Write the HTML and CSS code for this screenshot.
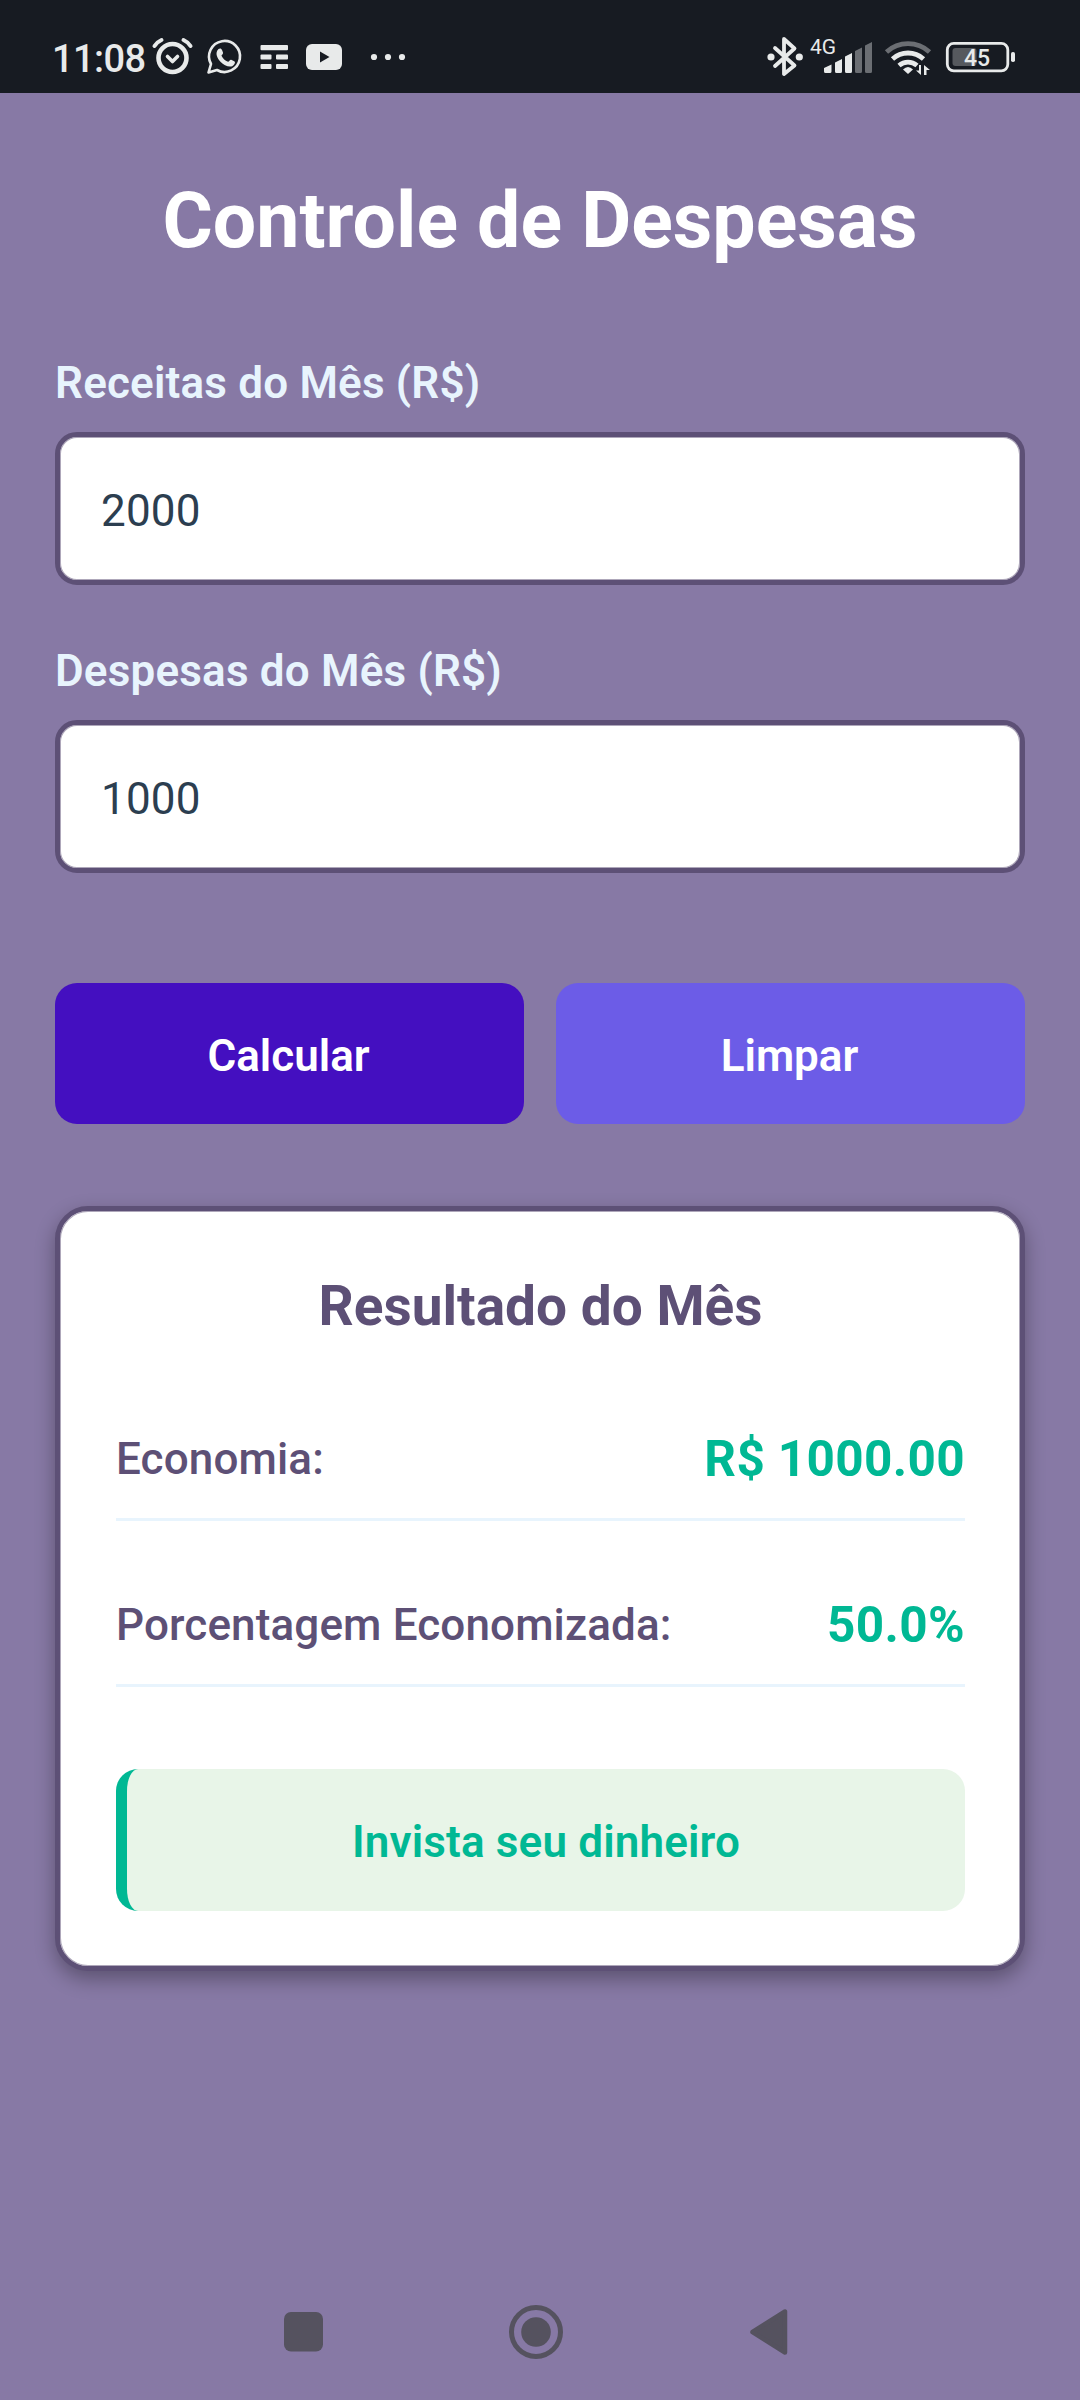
FILE: index.html
```html
<!DOCTYPE html>
<html lang="pt-BR">
<head>
<meta charset="utf-8">
<title>Controle de Despesas</title>
<link rel="stylesheet" href="styles.css">
</head>
<body>
<header class="status">
  <div class="status-left">
    <span class="clock">11:08</span>
    <svg class="icon" width="50" height="93" viewBox="150 0 50 93">
      <g fill="none" stroke="#e8eaea" stroke-linecap="round">
        <circle cx="172.500" cy="58" r="14" stroke-width="4.600"/>
        <path d="M167.500 56.500l5 5 5-5" stroke-width="3.600" stroke-linejoin="round"/>
        <path d="M154.500 46q2.500-4 7-6M190.500 46q-2.500-4-7-6" stroke-width="4"/>
      </g>
    </svg>
    <svg class="icon" width="50" height="93" viewBox="200 0 50 93">
      <path d="M208.500 72.500l2.500-8.500a15.500 15.500 0 1 1 6 6z" fill="none" stroke="#e8eaea" stroke-width="2.600" stroke-linejoin="round"/>
      <path d="M218.500 49c1.500-1 3-.5 3.500 1l1 2.500c.5 1.500-1.500 2.500-1.500 3.200 1.500 3 3.500 4.800 6.500 6 1 .2 2-2.500 3.200-2l3 1.600c2 1-.3 4.200-2 4.900-3.500 1.300-8.500-1-11.500-4.200-3.500-3.700-6.200-9-2.200-13z" fill="#e8eaea"/>
    </svg>
    <svg class="icon" width="50" height="93" viewBox="250 0 50 93" fill="#e8eaea">
      <rect x="260.500" y="45" width="27.500" height="5.300" rx="1"/>
      <rect x="260.500" y="54.500" width="11" height="5" rx="1"/><rect x="276" y="54.500" width="12" height="5" rx="1"/>
      <rect x="260.500" y="64" width="11" height="5" rx="1"/><rect x="276" y="64" width="12" height="5" rx="1"/>
    </svg>
    <svg class="icon" width="55" height="93" viewBox="300 0 55 93">
      <rect x="306" y="44" width="36" height="26" rx="6" fill="#e8eaea"/>
      <path d="M320 51.500v11l9.500-5.500z" fill="#171b22"/>
    </svg>
    <svg class="icon" width="60" height="93" viewBox="355 0 60 93" fill="#e8eaea">
      <circle cx="374" cy="57" r="3.100"/><circle cx="388" cy="57" r="3.100"/><circle cx="402" cy="57" r="3.100"/>
    </svg>
  </div>
  <div class="status-right">
    <svg class="icon" width="50" height="93" viewBox="760 0 50 93">
      <path d="M775 48l19.500 17.500-10.500 8.500v-35l10.500 9.500-19.500 17.500" fill="none" stroke="#e8eaea" stroke-width="3.800" stroke-linejoin="round" stroke-linecap="round"/>
      <circle cx="771" cy="57" r="3.600" fill="#e8eaea"/><circle cx="799.300" cy="57" r="3.600" fill="#e8eaea"/>
    </svg>
    <svg class="icon" width="68" height="93" viewBox="810 0 68 93" fill="#e8eaea">
      <text class="net" x="810" y="53.500">4G</text>
      <path d="M824 68l7.500-3.500v7q0 1.500-1.500 1.500h-4.500q-1.500 0-1.500-1.500zM835 62.500l7-3.500v12.500q0 1.500-1.500 1.500h-4q-1.500 0-1.500-1.500zM845 56.500l7-3.500v18.500q0 1.500-1.500 1.500h-4q-1.500 0-1.500-1.500z"/>
      <path fill="#6b6e73" d="M855 51l7-3.500v24q0 1.500-1.500 1.500h-4q-1.500 0-1.500-1.500zM865 45.500l7-3.500v29.500q0 1.500-1.500 1.500h-4q-1.500 0-1.500-1.500z"/>
    </svg>
    <svg class="icon" width="60" height="93" viewBox="878 0 60 93" fill="none" stroke-width="4.800">
      <path d="M886.500 52a32 32 0 0 1 43 0" stroke="#6b6e73"/>
      <path d="M892.500 59a23 23 0 0 1 31 0M899 65.500a14 14 0 0 1 18 0" stroke="#e8eaea"/>
      <path d="M903 69.500q5-5 10 0l-5 4.500z" fill="#e8eaea"/>
      <path d="M921 65v10l-5-4.500h3V65zM924 75V65l6 5h-3.500v5z" fill="#e8eaea"/>
    </svg>
    <svg class="icon" width="82" height="93" viewBox="938 0 82 93">
      <rect x="952.500" y="48" width="24" height="18" rx="3" fill="#56595e"/>
      <rect x="947.300" y="43.300" width="60.500" height="27.500" rx="6.500" fill="none" stroke="#e8eaea" stroke-width="2.800"/>
      <rect x="1011" y="52" width="4" height="10" rx="1.800" fill="#e8eaea"/>
      <text class="battery" x="977" y="65.500" text-anchor="middle">45</text>
    </svg>
  </div>
</header>
<main class="app">
  <h1 class="title">Controle de Despesas</h1>
  <div class="field">
    <label class="label">Receitas do Mês (R$)</label>
    <div class="input">2000</div>
  </div>
  <div class="field">
    <label class="label">Despesas do Mês (R$)</label>
    <div class="input">1000</div>
  </div>
  <div class="actions">
    <button class="btn btn-primary">Calcular</button>
    <button class="btn btn-secondary">Limpar</button>
  </div>
  <section class="card">
    <h2 class="card-title">Resultado do Mês</h2>
    <div class="row"><span class="row-label">Economia:</span><span class="row-value">R$ 1000.00</span></div>
    <div class="row"><span class="row-label">Porcentagem Economizada:</span><span class="row-value">50.0%</span></div>
    <div class="notice">Invista seu dinheiro</div>
  </section>
</main>
<nav class="navbar">
  <svg width="40" height="60" viewBox="283 2302 40 60"><rect x="284" y="2312" width="39" height="39.500" rx="7" fill="#55525f"/></svg>
  <svg width="60" height="60" viewBox="506 2302 60 60"><circle cx="536" cy="2332" r="24.500" fill="none" stroke="#55525f" stroke-width="5"/><circle cx="536" cy="2332" r="14.800" fill="#55525f"/></svg>
  <svg width="40" height="60" viewBox="749 2302 40 60"><path d="M752.500 2332l32.500-20.500v41z" fill="#55525f" stroke="#55525f" stroke-width="4.500" stroke-linejoin="round"/></svg>
</nav>
</body>
</html>
```
FILE: styles.css
```css
* { box-sizing: border-box; }

body {
  margin: 0;
  width: 1080px;
  height: 2400px;
  display: flex;
  flex-direction: column;
  background: #8779a5;
  font-family: Roboto, "Liberation Sans", sans-serif;
  overflow: hidden;
}

.status {
  height: 93px;
  flex: none;
  display: flex;
  justify-content: space-between;
  padding: 0 60px 0 52px;
  background: #171b22;
  color: #e8eaea;
}
.status-left, .status-right { display: flex; }
.icon { display: block; flex: none; }
.clock {
  width: 98px;
  padding-top: 35px;
  font-size: 38px;
  font-weight: 500;
  line-height: 48px;
  letter-spacing: -0.6px;
  white-space: nowrap;
}
.net { font-size: 21px; }
.battery { font-size: 23px; font-weight: 500; fill: #e8eaea; }

.app {
  flex: 1;
  display: flex;
  flex-direction: column;
  padding: 83px 55px 0;
}
.title {
  margin: 0 0 91px;
  font-size: 77px;
  line-height: 90px;
  font-weight: 700;
  text-align: center;
  color: #fff;
}
.field { margin-bottom: 60px; }
.label {
  display: block;
  margin-bottom: 23px;
  font-size: 44px;
  line-height: 52px;
  font-weight: 600;
  letter-spacing: 0.18px;
  color: #e8f4fd;
}
.input {
  display: flex;
  align-items: center;
  height: 153px;
  padding: 5px 41px 0;
  border: 5px solid #5d5076;
  border-radius: 22px;
  background: #fff;
  box-shadow: inset 0 0 0 1px #aea7ba;
  font-size: 44px;
  letter-spacing: 0.2px;
  color: #2c3e50;
}
.actions {
  display: grid;
  grid-template-columns: 1fr 1fr;
  gap: 32px;
  margin: 50px 0 82px;
}
.btn {
  height: 141px;
  padding: 4px 2px 0 0;
  border: 0;
  border-radius: 22px;
  font: 600 44px/52px Roboto, sans-serif;
  color: #fff;
}
.btn-primary { background: #440fc0; }
.btn-secondary { background: #6c5ce7; }

.card {
  height: 765px;
  padding: 63px 55px 0 56px;
  border: 5px solid #5d5076;
  border-radius: 33px;
  background: #fff;
  box-shadow: inset 0 0 0 1px #aea7ba, 0 8px 20px rgba(0, 0, 0, 0.32);
}
.card-title {
  margin: 0 0 62px;
  font-size: 55px;
  line-height: 64px;
  font-weight: 700;
  text-align: center;
  color: #5d5076;
}
.row {
  display: flex;
  align-items: center;
  justify-content: space-between;
  height: 121px;
  border-bottom: 3px solid #e8f4fd;
}
.row + .row { margin-top: 45px; }
.row-label { font-size: 44px; font-weight: 500; letter-spacing: 0.13px; color: #5d5076; }
.row-value { font-size: 49.5px; font-weight: 700; letter-spacing: 0.35px; color: #00b894; }
.notice {
  display: flex;
  align-items: center;
  justify-content: center;
  height: 142px;
  margin-top: 82px;
  padding-top: 4px;
  border-left: 11px solid #00b894;
  border-radius: 22px;
  background: #e8f5e8;
  font-size: 44px;
  font-weight: 600;
  letter-spacing: 0.15px;
  color: #00b894;
}

.navbar {
  height: 136px;
  flex: none;
  display: flex;
  align-items: center;
  justify-content: space-between;
  padding: 0 291px 0 283px;
}
```
